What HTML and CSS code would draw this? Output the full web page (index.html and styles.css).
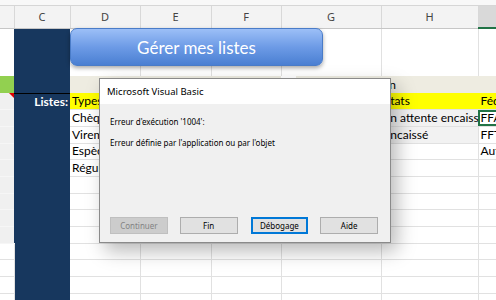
FILE: index.html
```html
<!DOCTYPE html>
<html lang="fr">
<head>
    <meta charset="UTF-8">
    <title>Gestion des listes</title>
    <link rel="stylesheet" href="styles.css">
</head>
<body>
    <div class="app">
        <div class="ribbon-edge"></div>
        <div class="sheet">
            <table class="grid">
                <colgroup>
                    <col class="col-b">
                    <col class="col-c">
                    <col class="col-d">
                    <col class="col-e">
                    <col class="col-f">
                    <col class="col-g">
                    <col class="col-h">
                    <col class="col-i">
                </colgroup>
                <thead>
                    <tr class="col-heads">
                        <th></th><th>C</th><th>D</th><th>E</th><th>F</th><th>G</th><th>H</th><th class="active">I</th>
                    </tr>
                </thead>
                <tbody>
                    <tr class="tall">
                        <td class="plain"></td><td class="navy"></td><td></td><td></td><td></td><td></td><td></td><td></td>
                    </tr>
                    <tr class="band">
                        <td class="green"></td><td class="navy rule"></td><td></td><td></td><td></td><td class="spill">Situation</td><td></td><td></td>
                    </tr>
                    <tr class="titles">
                        <td class="side note"></td><td class="navy label">Listes:</td>
                        <td>Types de paiement</td><td></td><td></td><td></td><td>États</td><td>Fédérations</td>
                    </tr>
                    <tr>
                        <td class="side"></td><td class="navy"></td>
                        <td class="filled">Chèque</td><td></td><td></td><td></td><td class="shade">En attente encaissement</td><td class="selected">FFA</td>
                    </tr>
                    <tr>
                        <td class="side"></td><td class="navy"></td>
                        <td class="filled">Virement</td><td></td><td></td><td></td><td class="shade">Encaissé</td><td>FFT</td>
                    </tr>
                    <tr>
                        <td class="side"></td><td class="navy"></td>
                        <td class="filled">Espèces</td><td></td><td></td><td></td><td class="filled"></td><td>Autre</td>
                    </tr>
                    <tr>
                        <td class="side"></td><td class="navy"></td>
                        <td class="filled">Régularisation</td><td></td><td></td><td></td><td></td><td></td>
                    </tr>
                    <tr>
                        <td class="side"></td><td class="navy"></td><td></td><td></td><td></td><td></td><td></td><td></td>
                    </tr>
                    <tr>
                        <td class="side"></td><td class="navy"></td><td></td><td></td><td></td><td></td><td></td><td></td>
                    </tr>
                    <tr>
                        <td class="side"></td><td class="navy"></td><td></td><td></td><td></td><td></td><td></td><td></td>
                    </tr>
                    <tr>
                        <td class="side"></td><td class="navy"></td><td></td><td></td><td></td><td></td><td></td><td></td>
                    </tr>
                    <tr>
                        <td></td><td class="navy"></td><td></td><td></td><td></td><td></td><td></td><td></td>
                    </tr>
                    <tr>
                        <td></td><td class="navy"></td><td></td><td></td><td></td><td></td><td></td><td></td>
                    </tr>
                    <tr>
                        <td></td><td class="navy"></td><td></td><td></td><td></td><td></td><td></td><td></td>
                    </tr>
                    <tr>
                        <td></td><td class="navy"></td><td></td><td></td><td></td><td></td><td></td><td></td>
                    </tr>
                </tbody>
            </table>

            <button class="macro-button">Gérer mes listes</button>

            <div class="vb-dialog">
                <div class="vb-title">Microsoft Visual Basic</div>
                <div class="vb-body">
                    <p>Erreur d'exécution '1004':</p>
                    <p>Erreur définie par l'application ou par l'objet</p>
                </div>
                <div class="vb-actions">
                    <button class="vb-btn" disabled>Continuer</button>
                    <button class="vb-btn">Fin</button>
                    <button class="vb-btn default">Débogage</button>
                    <button class="vb-btn">Aide</button>
                </div>
            </div>
        </div>
    </div>
</body>
</html>
```

FILE: styles.css
```css
* {
    box-sizing: border-box;
}

body {
    margin: 0;
    background: #ffffff;
    font-family: "Lato", "Liberation Sans", sans-serif;
}

.app {
    width: 496px;
    height: 300px;
    overflow: hidden;
    display: flex;
    flex-direction: column;
}

.ribbon-edge {
    height: 6px;
    flex: none;
    background: #f8f8f8;
    border-bottom: 1px solid #d6d6d6;
}

.sheet {
    position: relative; /* anchor for the shape and the dialog */
    flex: 1;
    overflow: hidden;
}

.grid {
    table-layout: fixed;
    border-collapse: collapse;
    width: 540px;
}

.col-b { width: 14px; }
.col-c { width: 56px; }
.col-d { width: 70px; }
.col-e { width: 71px; }
.col-f { width: 70px; }
.col-g { width: 100px; }
.col-h { width: 97px; }
.col-i { width: 62px; }

/* column letters */
.col-heads th {
    height: 22px;
    padding: 0;
    background: #f3f3f3;
    border-right: 1px solid #d8d8d8;
    border-bottom: 1px solid #c6c6c6;
    font-family: "Noto Sans", sans-serif;
    font-weight: normal;
    font-size: 11px;
    color: #444;
}

.col-heads th.active {
    background: #d9d9d9;
    border-bottom: 2px solid #217346;
    color: transparent;
}

.grid td {
    height: 16.7px;
    padding: 0 2px;
    border-right: 1px solid #e1e1e1;
    border-bottom: 1px solid #e1e1e1;
    font-size: 12px;
    line-height: 14px;
    color: #000;
    white-space: nowrap;
    overflow: hidden;
}

.grid tr.tall td {
    height: 48px;
    border-bottom: none;
}

.grid td.plain {
    border-right: none;
}

.grid td.navy {
    background: #17375e;
    border-right: none;
    border-bottom: none;
}

.grid td.navy.rule {
    border-bottom: 1px solid #000;
}

.grid td.label {
    text-align: right;
    color: #fff;
    font-weight: bold;
}

.band td {
    height: 17px;
    background: #eeece1;
    border-right: none;
    border-bottom: none;
}

.band td.green {
    background: #92d050;
}

.band td.spill {
    overflow: visible;
    text-align: right;
    padding-right: 0;
    position: relative;
    left: 15px;
}

.titles td {
    background: #ffff00;
    border-right-color: #ffff00;
}

.grid td.side {
    background: #f0f0f0;
    border-right: none;
    border-bottom-color: #f6f6f6;
}

.grid td.note {
    position: relative;
}

/* comment indicator */
.grid td.note::after {
    content: "";
    position: absolute;
    top: 0;
    right: 0;
    border-top: 5px solid #e00000;
    border-left: 5px solid transparent;
}

.grid td.filled {
    background: #fff;
}

.grid td.shade {
    background: #f2f2f2;
}

.grid td.selected {
    outline: 2px solid #217346;
    outline-offset: -2px;
}

/* shape holding the macro */
.macro-button {
    position: absolute;
    left: 70px;
    top: 22px;
    width: 253px;
    height: 38px;
    border: 1px solid #4a7cc8;
    border-radius: 7px;
    background: linear-gradient(#9cbff7, #6d9be6 50%, #4a7fd2);
    box-shadow: 0 2px 4px rgba(0, 0, 0, 0.35);
    color: #fff;
    font-family: "Lato", sans-serif;
    font-size: 17px;
    padding: 0;
}

/* runtime error box */
.vb-dialog {
    position: absolute;
    left: 99px;
    top: 72px;
    width: 292px;
    height: 165px;
    display: flex;
    flex-direction: column;
    background: #f0f0f0;
    border: 1px solid #8a8a8a;
    box-shadow: 6px 8px 18px rgba(0, 0, 0, 0.28);
    font-family: "Noto Sans", sans-serif;
}

.vb-title {
    height: 25px;
    flex: none;
    display: flex;
    align-items: center;
    padding-left: 7px;
    background: #fff;
    font-size: 9.5px;
    color: #000;
}

.vb-body {
    flex: 1;
    padding: 12px 10px 0;
}

.vb-body p {
    margin: 0 0 10px;
    font-size: 8px;
    line-height: 11px;
    color: #000;
}

.vb-actions {
    display: flex;
    gap: 12px;
    padding: 0 12px 8px 10px;
}

.vb-btn {
    width: 58px;
    height: 17px;
    padding: 0;
    background: #e1e1e1;
    border: 1px solid #adadad;
    font-family: "Noto Sans", sans-serif;
    font-size: 8px;
    color: #000;
}

.vb-btn:disabled {
    background: #cccccc;
    border-color: #bfbfbf;
    color: #838383;
}

.vb-btn.default {
    border: 2px solid #0078d7;
    margin-left: 1px;
}
```
